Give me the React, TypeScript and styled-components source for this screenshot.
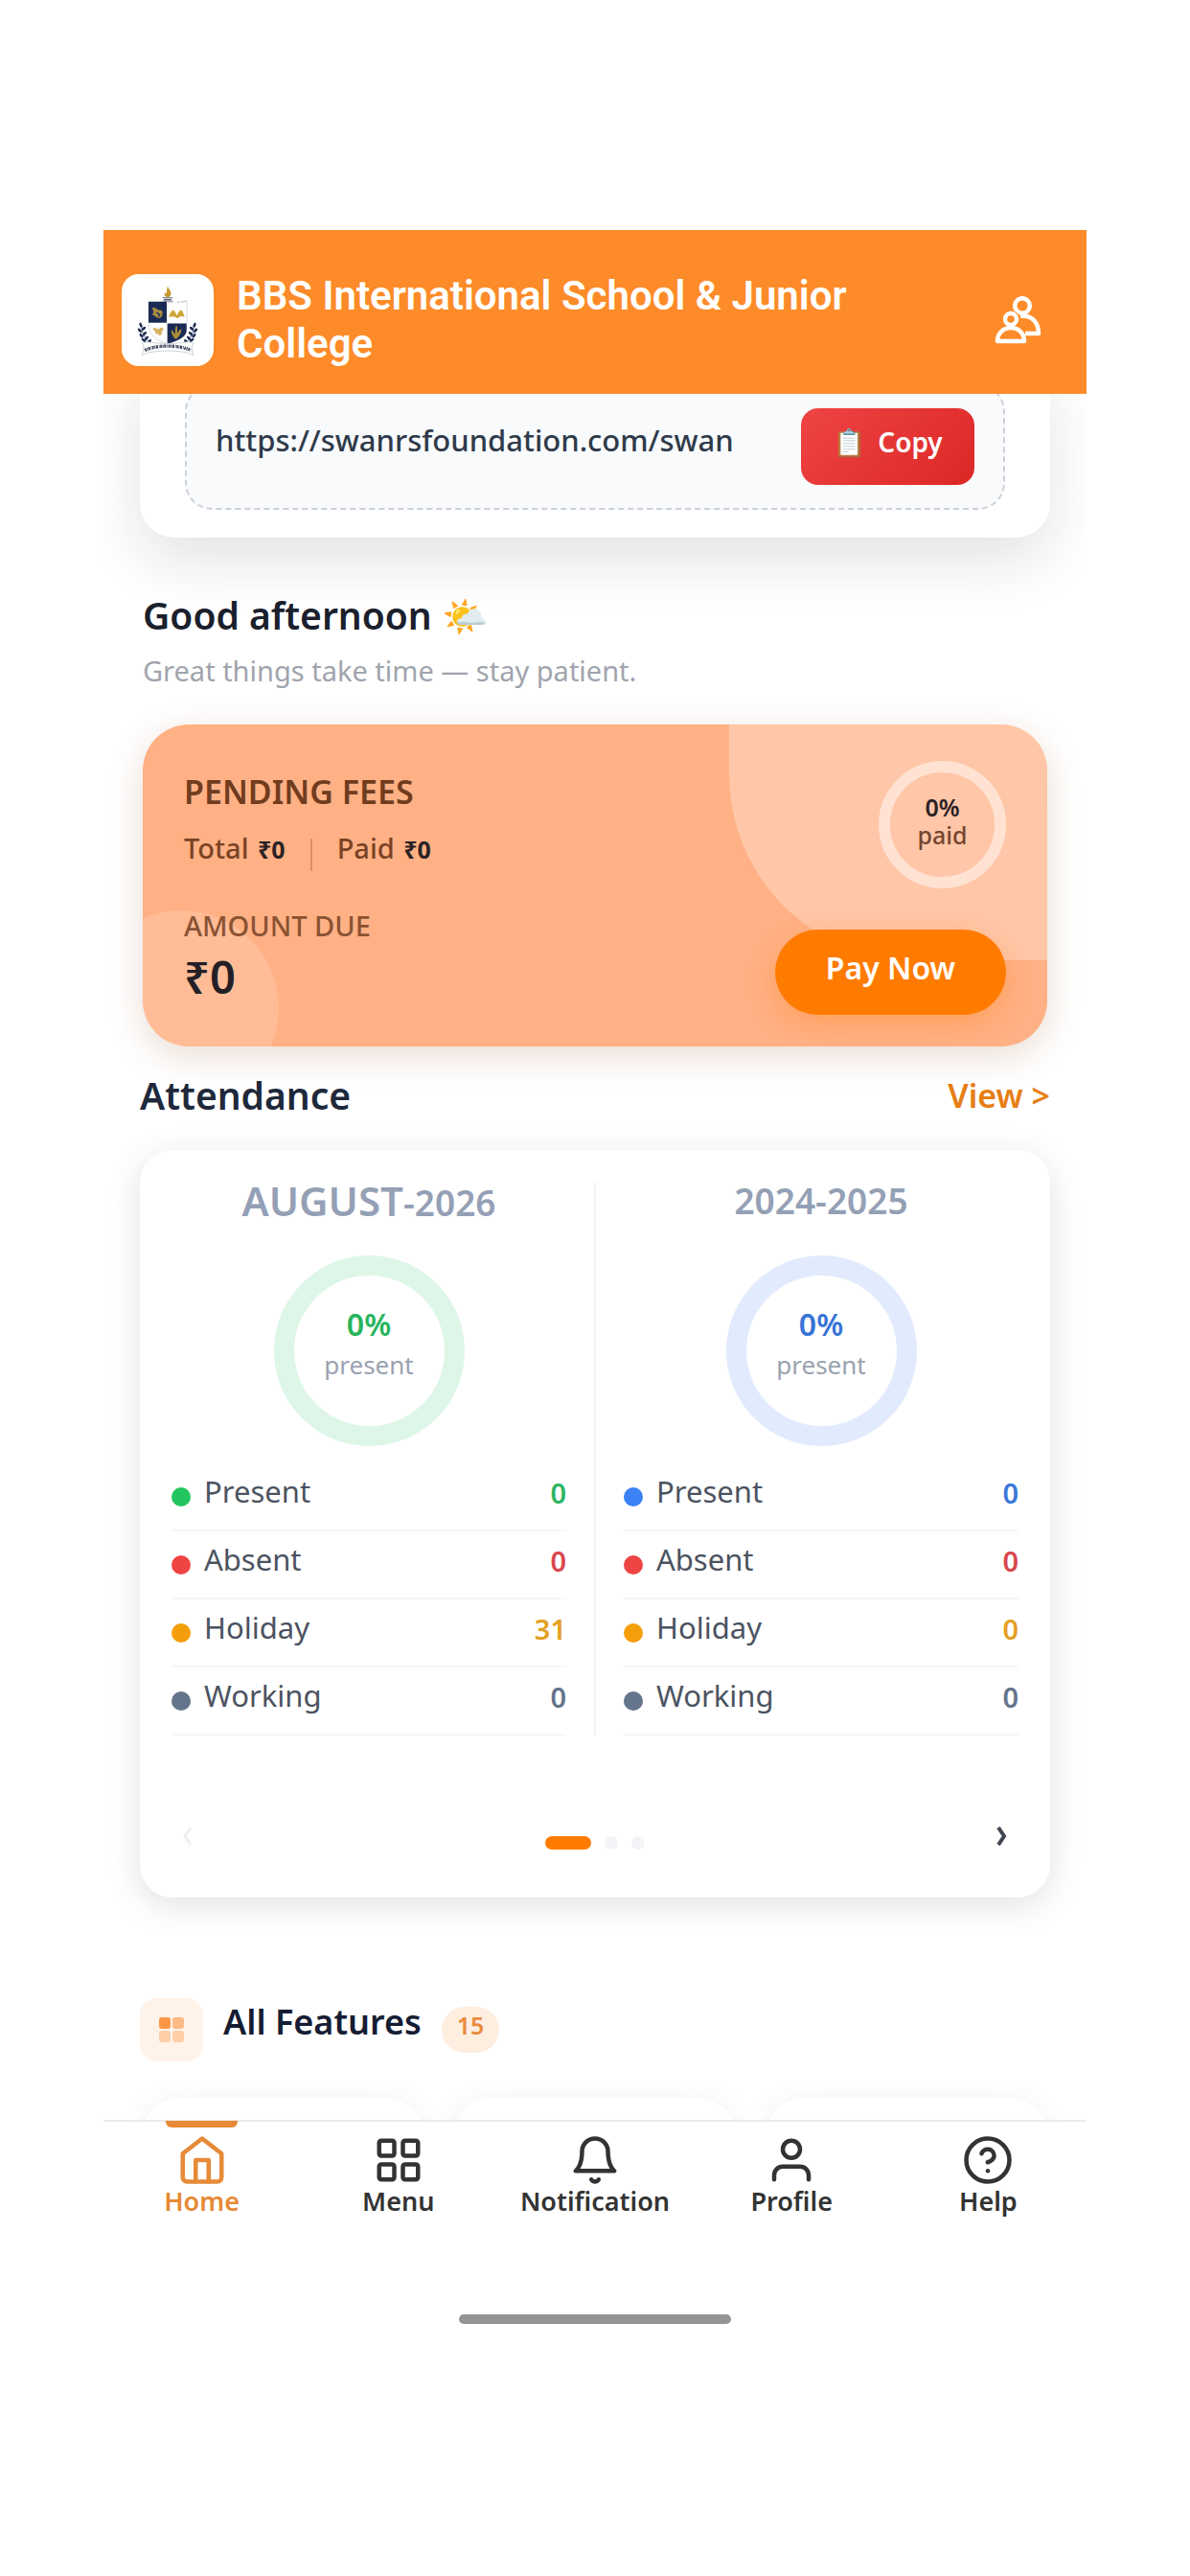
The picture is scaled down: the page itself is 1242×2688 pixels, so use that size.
// src/App.tsx
import React from 'react';
import styled, { createGlobalStyle } from 'styled-components';

const GlobalStyle = createGlobalStyle`
  * {
    box-sizing: border-box;
  }

  body {
    margin: 0;
    background: #ffffff;
    font-family: 'Noto Sans', 'Open Sans', sans-serif;
    color: #1e2433;
  }

  button {
    font-family: inherit;
    cursor: pointer;
  }

  h1, h2, h3, p, ul {
    margin: 0;
    padding: 0;
  }
`;

// Page frame
const Page = styled.div`
  min-height: 100vh;
  padding: 240px 108px 0;
  background: #ffffff;
`;

const Screen = styled.div`
  overflow: hidden;
`;

// Header
const Header = styled.header`
  position: relative;
  z-index: 2;
  display: flex;
  align-items: center;
  gap: 24px;
  padding: 44px 46px 27px 19px;
  background: #fd8b29;
`;

const LogoBox = styled.div`
  flex: none;
  width: 96px;
  height: 96px;
  border-radius: 18px;
  background: #ffffff;
  overflow: hidden;
`;

const SchoolName = styled.h1`
  flex: 1;
  font-family: Roboto, sans-serif;
  font-size: 42px;
  font-weight: 600;
  line-height: 50px;
  color: #ffffff;
`;

const IconButton = styled.button`
  display: flex;
  margin-left: 100px;
  padding: 0;
  border: none;
  background: none;
`;

// Main content
const Content = styled.main`
  display: flow-root;
  padding: 0 38px;
`;

const LinkCard = styled.section`
  margin-top: -40px;
  padding: 30px 47px 29px;
  border-radius: 36px;
  background: #ffffff;
  box-shadow: 0 24px 60px rgba(15, 23, 42, 0.12);
`;

const LinkBox = styled.div`
  display: flex;
  align-items: center;
  justify-content: space-between;
  padding: 23px 30px 24px;
  border: 2px dashed #cbd0d8;
  border-radius: 28px;
  background: #f8fafc;
`;

const LinkText = styled.span`
  padding-bottom: 14px;
  font-size: 31px;
  font-weight: 500;
  line-height: 40px;
  color: #2f3a4a;
`;

const CopyButton = styled.button`
  display: flex;
  align-items: center;
  justify-content: center;
  gap: 12px;
  width: 181px;
  height: 80px;
  padding: 0 0 10px;
  border: none;
  border-radius: 18px;
  background: linear-gradient(135deg, #ef4444, #dc2626);
  color: #ffffff;
  font-size: 28px;
  font-weight: 600;
`;

const Greeting = styled.section`
  margin: 57px 3px 36px;
`;

const GreetingTitle = styled.h2`
  font-size: 39px;
  font-weight: 600;
  line-height: 48px;
  color: #1a202c;
`;

const GreetingText = styled.p`
  margin-top: 14px;
  font-size: 29px;
  line-height: 40px;
  color: #a0a4ac;
`;

// Fees card
const FeesCard = styled.section`
  position: relative;
  margin: 0 3px;
  padding: 38px 43px 33px;
  border-radius: 48px;
  background: #ffb185;
  box-shadow: 0 10px 36px rgba(150, 80, 30, 0.2);
  overflow: hidden;
`;

const CornerShade = styled.span`
  position: absolute;
  top: 0;
  right: 0;
  width: 332px;
  height: 246px;
  border-radius: 0 0 0 194px;
  background: rgba(255, 255, 255, 0.28);
`;

const CornerBubble = styled.span`
  position: absolute;
  left: -62px;
  bottom: -62px;
  width: 204px;
  height: 204px;
  border-radius: 50%;
  background: rgba(255, 255, 255, 0.14);
`;

const FeesRow = styled.div`
  position: relative;
  display: flex;
  align-items: flex-start;
  justify-content: space-between;

  & + & {
    margin-top: 21px;
  }
`;

const FeesTitle = styled.h2`
  margin: 12px 0 15px;
  font-size: 34px;
  font-weight: 600;
  line-height: 40px;
  color: #713c1e;
`;

const FeesTotals = styled.div`
  display: flex;
  align-items: center;
  font-size: 29px;
  font-weight: 500;
  line-height: 40px;
  color: #7a4224;
`;

const FeesAmount = styled.strong`
  margin-left: 2px;
  font-size: 25px;
  font-weight: 700;
  color: #2b2224;
`;

const FeesDivider = styled.span`
  width: 2px;
  height: 34px;
  margin: 14px 26px 0;
  background: #dc9068;
`;

const FeesRing = styled.div`
  display: flex;
  flex-direction: column;
  align-items: center;
  width: 133px;
  height: 133px;
  padding-top: 22px;
  border: 12px solid #ffe2d2;
  border-radius: 50%;
  font-size: 25px;
  font-weight: 500;
  line-height: 29px;
  color: #74452f;
`;

const FeesPercent = styled.strong`
  font-weight: 600;
  color: #2b2224;
`;

const DueLabel = styled.p`
  font-size: 29px;
  font-weight: 500;
  line-height: 36px;
  color: #8a5233;
`;

const DueAmount = styled.p`
  margin-top: 7px;
  padding-bottom: 12px;
  font-size: 47px;
  font-weight: 600;
  line-height: 56px;
  color: #231f26;
`;

const PayButton = styled.button`
  align-self: flex-end;
  width: 241px;
  height: 89px;
  padding: 0 0 10px;
  border: none;
  border-radius: 45px;
  background: #ff7b00;
  box-shadow: 0 10px 30px rgba(255, 123, 0, 0.3);
  color: #ffffff;
  font-size: 32px;
  font-weight: 600;
`;

// Attendance
const SectionHead = styled.div`
  display: flex;
  align-items: center;
  justify-content: space-between;
  margin: 27px 0 33px;
`;

const SectionTitle = styled.h2`
  font-size: 39px;
  font-weight: 600;
  line-height: 48px;
  color: #1e293b;
`;

const ViewLink = styled.a`
  font-size: 34px;
  font-weight: 600;
  line-height: 48px;
  color: #e67e14;
  text-decoration: none;
`;

const AttendanceCard = styled.section`
  padding: 34px 33px 39px;
  border-radius: 34px;
  background: #ffffff;
  box-shadow: 0 8px 36px rgba(0, 0, 0, 0.12);
`;

const Periods = styled.div`
  display: grid;
  grid-template-columns: 1fr 2px 1fr;
  column-gap: 29px;
`;

const PeriodDivider = styled.span`
  background: #f2f3f5;
`;

const Period = styled.div`
  display: flex;
  flex-direction: column;
  align-items: center;
`;

const PeriodTitle = styled.h3`
  height: 38px;
  font-size: 37px;
  font-weight: 600;
  line-height: 38px;
  color: #94a0b5;
`;

const PeriodMonth = styled.span`
  font-size: 42px;
`;

const Ring = styled.div<{ $track: string }>`
  display: flex;
  flex-direction: column;
  align-items: center;
  width: 199px;
  height: 199px;
  margin: 38px 0 18px;
  padding-top: 31px;
  border: 21px solid ${({ $track }) => $track};
  border-radius: 50%;
`;

const RingPercent = styled.strong<{ $color: string }>`
  font-size: 32px;
  font-weight: 600;
  line-height: 40px;
  color: ${({ $color }) => $color};
`;

const RingLabel = styled.span`
  margin-top: 4px;
  font-size: 26px;
  line-height: 36px;
  color: #9aa2b0;
`;

const StatList = styled.ul`
  width: 100%;
  list-style: none;
`;

const StatRow = styled.li`
  display: flex;
  align-items: center;
  gap: 14px;
  height: 71px;
  border-bottom: 2px solid #f5f6f7;
`;

const Dot = styled.span<{ $color: string }>`
  width: 20px;
  height: 20px;
  border-radius: 50%;
  background: ${({ $color }) => $color};
`;

const StatLabel = styled.span`
  flex: 1;
  padding-bottom: 12px;
  font-size: 31px;
  line-height: 40px;
  color: #4b5361;
`;

const StatValue = styled.strong<{ $color: string }>`
  padding-bottom: 8px;
  font-size: 29px;
  font-weight: 600;
  line-height: 40px;
  color: ${({ $color }) => $color};
`;

const Pager = styled.div`
  display: flex;
  align-items: center;
  justify-content: space-between;
  margin-top: 80px;
`;

const PagerButton = styled.button`
  display: flex;
  align-items: center;
  justify-content: center;
  width: 34px;
  height: 50px;
  padding: 0;
  border: none;
  background: none;
  color: #3f4650;

  &:disabled {
    color: #eeeff1;
  }
`;

const PagerDots = styled.div`
  display: flex;
  gap: 14px;
  padding-top: 14px;
`;

const PagerDot = styled.span<{ $active?: boolean }>`
  width: ${({ $active }) => ($active ? '48px' : '14px')};
  height: 14px;
  border-radius: 7px;
  background: ${({ $active }) => ($active ? '#ff7b00' : '#f3f4f8')};
`;

// Features
const FeaturesHead = styled.div`
  display: flex;
  align-items: center;
  gap: 21px;
  margin: 105px 0 38px;
`;

const FeaturesIcon = styled.span`
  display: flex;
  align-items: center;
  justify-content: center;
  width: 66px;
  height: 66px;
  border-radius: 18px;
  background: #fff2e9;
`;

const FeaturesTitle = styled.h2`
  padding-bottom: 16px;
  font-size: 36px;
  font-weight: 600;
  line-height: 48px;
  color: #161d33;
`;

const FeaturesCount = styled.span`
  height: 48px;
  padding: 0 16px;
  border-radius: 24px;
  background: #feeee0;
  color: #e88b3a;
  font-size: 25px;
  font-weight: 600;
  line-height: 38px;
`;

// The cards run on under the tab bar
const FeatureGrid = styled.div`
  display: grid;
  grid-template-columns: repeat(3, 1fr);
  gap: 26px;
  margin-bottom: -97px;
`;

const FeatureCard = styled.div`
  height: 120px;
  border-radius: 44px;
  background: #ffffff;
  box-shadow: 0 4px 30px rgba(0, 0, 0, 0.07);
`;

// Tab bar
const TabBar = styled.nav`
  position: relative;
  z-index: 2;
  display: grid;
  grid-template-columns: repeat(5, 1fr);
  border-top: 2px solid #ebebeb;
  background: #ffffff;
`;

const Tab = styled.a<{ $active?: boolean }>`
  position: relative;
  display: flex;
  flex-direction: column;
  align-items: center;
  padding-top: 13px;
  color: ${({ $active }) => ($active ? '#e68a37' : '#333333')};
  font-size: 27px;
  font-weight: 600;
  line-height: 32px;
  text-decoration: none;
`;

const TabMarker = styled.span`
  position: absolute;
  top: -1px;
  width: 75px;
  height: 7px;
  border-radius: 0 0 6px 6px;
  background: #e68a37;
`;

const GestureArea = styled.div`
  position: relative;
  z-index: 2;
  display: flex;
  justify-content: center;
  padding: 102px 0 24px;
  background: #ffffff;
`;

const GestureBar = styled.span`
  width: 284px;
  height: 10px;
  border-radius: 5px;
  background: #949494;
`;

// Drawings
const leftLeaves: [number, number, number][] = [
  [141, 323, 70], [150, 334, -40], [138, 340, 50], [153, 350, -40], [143, 356, 45],
  [159, 364, -45], [150, 370, 35], [168, 374, -50],
];

const Laurel: React.FC = () => (
  <g fill="#1d2c52">
    {leftLeaves.map(([x, y, r]) => (
      <ellipse key={`${x}-${y}`} cx={x} cy={y} rx="8" ry="4" transform={`rotate(${r} ${x} ${y})`} />
    ))}
    <path d="M144 322C142 345 154 368 174 382" fill="none" stroke="#1d2c52" strokeWidth="2" />
  </g>
);

const Crest: React.FC = () => (
  <svg width="96" height="96" viewBox="82 164 286 287" role="img" aria-label="School crest">
    <path d="M225 201C227 211 238 216 235 228C233 234 229 236 224 236C217 235 213 229 216 221C217 225 220 226 221 223C224 216 221 209 225 201Z" fill="#c59a2a" />
    <path d="M209 238H240M213 243H237M211 248H239" stroke="#5a6070" strokeWidth="3" />
    <path d="M165 250H222V316H165Z" fill="#1b2b55" />
    <path d="M224 318H284V340C284 358 262 372 224 382Z" fill="#1b2b55" />
    <path d="M224 251C245 249 262 256 286 247" fill="none" stroke="#8a91a3" strokeWidth="2" strokeDasharray="20 10 8 4" />
    <path d="M166 318C166 350 184 369 222 381M285 252V316" fill="none" stroke="#c3c7d1" strokeWidth="2" />
    <path d="M176 270C188 264 192 280 204 276C213 281 209 300 199 301C187 302 184 290 176 291C183 286 181 277 176 270Z" fill="#a98e40" />
    <path d="M190 284L200 290L196 297" fill="none" stroke="#1b2b55" strokeWidth="4" />
    <path d="M229 299C231 286 237 278 243 276C248 280 251 288 254 293C257 284 262 277 268 276C273 281 276 291 278 299C271 294 264 295 260 300C254 303 249 298 245 297C238 295 234 297 229 299Z" fill="#cfa63b" />
    <path d="M180 332C188 329 191 338 198 335C204 329 210 330 212 336C209 342 204 343 207 349C204 356 198 358 195 351C187 352 184 346 187 342C181 341 179 337 180 332Z" fill="#d6b45e" />
    <path d="M237 338C244 342 244 349 248 350C250 341 246 331 253 325C257 333 253 343 256 348C260 342 261 336 268 336C267 348 260 362 251 367C242 361 236 350 237 338Z" fill="#ae8d3a" />
    <Laurel />
    <g transform="translate(450 0) scale(-1 1)">
      <Laurel />
    </g>
    <path d="M145 380C154 377 159 375 166 376C202 382 248 382 284 376C292 375 298 377 306 380L300 392L305 417C278 399 172 399 145 417L151 392Z" fill="#ffffff" stroke="#b9bcc4" strokeWidth="2" />
    <path d="M154 402C185 384 265 384 297 402" fill="none" stroke="#3c4458" strokeWidth="10" strokeDasharray="5 2 3 2 6 3 2 2" />
  </svg>
);

const PeopleIcon: React.FC = () => (
  <svg width="50" height="50" viewBox="0 0 50 50" fill="none" stroke="#ffffff" strokeWidth="4.5" strokeLinejoin="round">
    <circle cx="29" cy="10" r="7.8" />
    <path d="M27 21C39 19 46 28 46 39H32" />
    <circle cx="17" cy="25" r="6" fill="#fd8b29" stroke="#fd8b29" strokeWidth="8" />
    <circle cx="17" cy="24" r="6" />
    <path d="M3 47C3 39 9 33 17 33S31 39 31 47Z" fill="#fd8b29" />
  </svg>
);

const TilesIcon: React.FC = () => (
  <svg width="26" height="26" viewBox="0 0 26 26" fill="#fa8d32">
    <rect x="0" y="0" width="12" height="12" rx="3" opacity="0.9" />
    <rect x="14" y="0" width="12" height="12" rx="3" opacity="0.55" />
    <rect x="0" y="14" width="12" height="12" rx="3" opacity="0.35" />
    <rect x="14" y="14" width="12" height="12" rx="3" opacity="0.35" />
  </svg>
);

const TabIcon: React.FC<{ children: React.ReactNode }> = ({ children }) => (
  <svg
    width="54"
    height="54"
    viewBox="0 0 24 24"
    fill="none"
    stroke="currentColor"
    strokeWidth="2"
    strokeLinecap="round"
    strokeLinejoin="round"
  >
    {children}
  </svg>
);

// Data
interface PeriodData {
  title: React.ReactNode;
  track: string;
  percentColor: string;
  stats: { label: string; value: number; color: string; dot: string }[];
}

const buildStats = (color: string, dot: string, holidays: number) => [
  { label: 'Present', value: 0, color, dot },
  { label: 'Absent', value: 0, color: '#d9464d', dot: '#ef4444' },
  { label: 'Holiday', value: holidays, color: '#e5a022', dot: '#f59e0b' },
  { label: 'Working', value: 0, color: '#64748b', dot: '#64748b' },
];

const periods: PeriodData[] = [
  {
    title: (
      <>
        <PeriodMonth>AUGUST</PeriodMonth>-2026
      </>
    ),
    track: '#def6e7',
    percentColor: '#27b45c',
    stats: buildStats('#2eb564', '#22c55e', 31),
  },
  {
    title: '2024-2025',
    track: '#e2ebfd',
    percentColor: '#3873d6',
    stats: buildStats('#3c78d8', '#3b82f6', 0),
  },
];

const tabs = [
  {
    label: 'Home',
    icon: (
      <>
        <path d="M3 9l9-7 9 7v11a2 2 0 0 1-2 2H5a2 2 0 0 1-2-2z" />
        <path d="M9 22V12h6v10" />
      </>
    ),
  },
  {
    label: 'Menu',
    icon: (
      <>
        <rect x="3" y="3" width="7" height="7" rx="1" />
        <rect x="14" y="3" width="7" height="7" rx="1" />
        <rect x="14" y="14" width="7" height="7" rx="1" />
        <rect x="3" y="14" width="7" height="7" rx="1" />
      </>
    ),
  },
  {
    label: 'Notification',
    icon: (
      <>
        <path d="M6 8a6 6 0 0 1 12 0c0 7 3 9 3 9H3s3-2 3-9" />
        <path d="M10.3 21a1.94 1.94 0 0 0 3.4 0" />
      </>
    ),
  },
  {
    label: 'Profile',
    icon: (
      <>
        <path d="M20 21v-2a4 4 0 0 0-4-4H8a4 4 0 0 0-4 4v2" />
        <circle cx="12" cy="7" r="4" />
      </>
    ),
  },
  {
    label: 'Help',
    icon: (
      <>
        <circle cx="12" cy="12" r="10" />
        <path d="M9.09 9a3 3 0 0 1 5.83 1c0 2-3 3-3 3" />
        <path d="M12 17h.01" />
      </>
    ),
  },
];

const PeriodColumn: React.FC<{ period: PeriodData }> = ({ period }) => (
  <Period>
    <PeriodTitle>{period.title}</PeriodTitle>
    <Ring $track={period.track}>
      <RingPercent $color={period.percentColor}>0%</RingPercent>
      <RingLabel>present</RingLabel>
    </Ring>
    <StatList>
      {period.stats.map((stat) => (
        <StatRow key={stat.label}>
          <Dot $color={stat.dot} />
          <StatLabel>{stat.label}</StatLabel>
          <StatValue $color={stat.color}>{stat.value}</StatValue>
        </StatRow>
      ))}
    </StatList>
  </Period>
);

const App: React.FC = () => {
  return (
    <Page>
      <GlobalStyle />
      <Screen>
        <Header>
          <LogoBox>
            <Crest />
          </LogoBox>
          <SchoolName>BBS International School &amp; Junior College</SchoolName>
          <IconButton type="button" aria-label="Switch student">
            <PeopleIcon />
          </IconButton>
        </Header>

        <Content>
          <LinkCard>
            <LinkBox>
              <LinkText>https://swanrsfoundation.com/swan</LinkText>
              <CopyButton type="button">
                <span>📋</span>
                Copy
              </CopyButton>
            </LinkBox>
          </LinkCard>

          <Greeting>
            <GreetingTitle>Good afternoon 🌤️</GreetingTitle>
            <GreetingText>Great things take time — stay patient.</GreetingText>
          </Greeting>

          <FeesCard>
            <CornerShade />
            <CornerBubble />
            <FeesRow>
              <div>
                <FeesTitle>PENDING FEES</FeesTitle>
                <FeesTotals>
                  <span>
                    Total <FeesAmount>₹0</FeesAmount>
                  </span>
                  <FeesDivider />
                  <span>
                    Paid <FeesAmount>₹0</FeesAmount>
                  </span>
                </FeesTotals>
              </div>
              <FeesRing>
                <FeesPercent>0%</FeesPercent>
                paid
              </FeesRing>
            </FeesRow>
            <FeesRow>
              <div>
                <DueLabel>AMOUNT DUE</DueLabel>
                <DueAmount>₹0</DueAmount>
              </div>
              <PayButton type="button">Pay Now</PayButton>
            </FeesRow>
          </FeesCard>

          <SectionHead>
            <SectionTitle>Attendance</SectionTitle>
            <ViewLink href="#attendance">View &gt;</ViewLink>
          </SectionHead>

          <AttendanceCard>
            <Periods>
              <PeriodColumn period={periods[0]} />
              <PeriodDivider />
              <PeriodColumn period={periods[1]} />
            </Periods>
            <Pager>
              <PagerButton type="button" aria-label="Previous" disabled>
                <svg width="12" height="20" viewBox="0 0 12 20" fill="none" stroke="currentColor" strokeWidth="3">
                  <path d="M9 1L3 10L9 19" />
                </svg>
              </PagerButton>
              <PagerDots>
                <PagerDot $active />
                <PagerDot />
                <PagerDot />
              </PagerDots>
              <PagerButton type="button" aria-label="Next">
                <svg width="12" height="20" viewBox="0 0 12 20" fill="none" stroke="currentColor" strokeWidth="4">
                  <path d="M2 1L8 10L2 19" />
                </svg>
              </PagerButton>
            </Pager>
          </AttendanceCard>

          <FeaturesHead>
            <FeaturesIcon>
              <TilesIcon />
            </FeaturesIcon>
            <FeaturesTitle>All Features</FeaturesTitle>
            <FeaturesCount>15</FeaturesCount>
          </FeaturesHead>
          <FeatureGrid>
            <FeatureCard />
            <FeatureCard />
            <FeatureCard />
          </FeatureGrid>
        </Content>

        <TabBar>
          {tabs.map((tab, index) => (
            <Tab key={tab.label} href={`#${tab.label.toLowerCase()}`} $active={index === 0}>
              {index === 0 && <TabMarker />}
              <TabIcon>{tab.icon}</TabIcon>
              {tab.label}
            </Tab>
          ))}
        </TabBar>

        <GestureArea>
          <GestureBar />
        </GestureArea>
      </Screen>
    </Page>
  );
};

export default App;
